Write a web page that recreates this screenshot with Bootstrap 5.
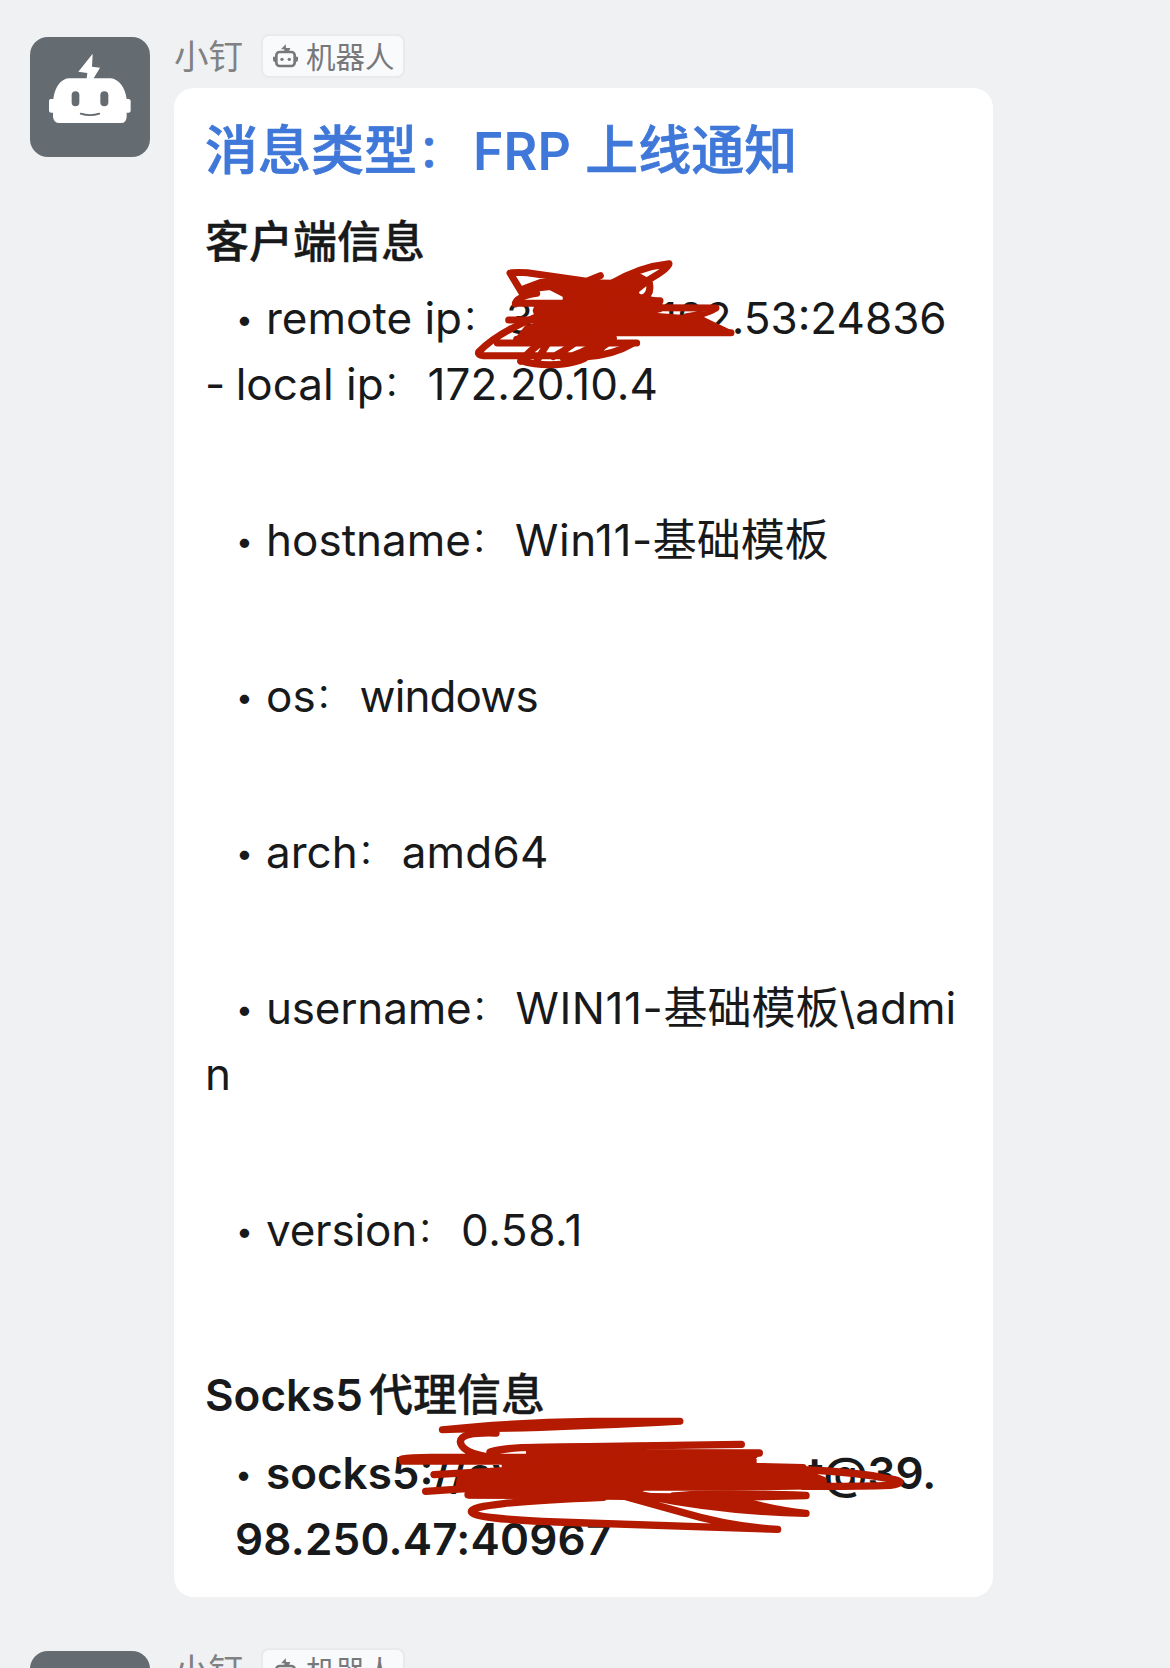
<!DOCTYPE html>
<html lang="zh-CN">
<head>
<meta charset="utf-8">
<meta name="viewport" content="width=device-width, initial-scale=1">
<title>小钉</title>
<link href="https://cdn.jsdelivr.net/npm/bootstrap@5.3.0/dist/css/bootstrap.min.css" rel="stylesheet">
<style>
body{background:#eff1f3;color:#18191a;font-family:Inter,"Noto Sans CJK SC",sans-serif;font-size:44px;line-height:66px;height:1668px;overflow:hidden}
.msg{padding:34px 0 0 30px;height:1614px;gap:24px}
.msg-next{height:54px;overflow:hidden}
.avatar{width:120px;height:120px;margin-top:3px;flex:none}
.who{height:44px;gap:18px;margin-bottom:10px}
.who-name{font-size:34.5px;line-height:44px;color:#808183;padding-top:2px}
.bot-tag{width:144px;height:44px;border:2px solid #e8eaec;border-radius:8px;background:#f9fafc;color:#77787a;font-size:29.5px;line-height:40px;padding-left:10px;gap:8px}
.bot-tag span{padding-top:2px}
.bubble{width:819px;height:1509px;border-radius:20px;padding:30px 31px 0;white-space:nowrap}
.ttl{font-size:53px;line-height:66px;font-weight:500;color:#3f78d8;margin:0 0 24px;-webkit-text-stroke:.7px #3f78d8}
.ttl b{font-size:52px;font-weight:600;-webkit-text-stroke:0;padding-left:3px}
.sec{font-size:44px;line-height:66px;font-weight:500;margin:0 0 10px;-webkit-text-stroke:.3px #18191a}
.sec b{font-weight:600;margin-right:6px;-webkit-text-stroke:0}
.sec-last{margin-bottom:12px}
.line{height:66px}
.gap-after{margin-bottom:90px}
.gap-section{margin-bottom:99px}
.indent{padding-left:30px}
.dot{display:inline-block;width:61px;padding-left:31px;font-size:30px;line-height:1;position:relative;top:-4px}
.dash{letter-spacing:-1px}
.cln{display:inline-block;width:44px;font-size:33px;line-height:1;padding-left:0;position:relative;top:-5px}
.ttl .cln{width:53px;font-size:44px;padding-left:1px;top:-3px}
.hid-a{display:inline-block;width:126px}
.hid-b{display:inline-block;width:290px}
.ls1{letter-spacing:.2px}.ls2{letter-spacing:.6px}.ls3{letter-spacing:-.9px}.ls4{letter-spacing:-.2px}
.scribble{position:absolute;overflow:visible;fill:none;stroke:#b31a00;stroke-linecap:round;stroke-linejoin:round;pointer-events:none}
.scribble-ip{left:440px;top:240px}
.scribble-proxy{left:390px;top:1410px}
</style>
</head>
<body>
<svg class="d-none">
<symbol id="bot" viewBox="0 0 360 360">
<rect width="360" height="360" rx="54" fill="#646b71"/>
<path fill="#fff" d="M188 50L145 104L172 108L170 124H116C92 126 74 152 70 186H61Q57 187 57 192V221Q57 227 64 227H69V240Q72 258 88 258H274Q288 258 290 240V227H297Q302 226 302 221V192Q302 187 297 186H290C286 152 266 126 242 124H191L210 92L186 89Z"/>
<rect x="125" y="163" width="23" height="45" rx="11.5" fill="#646b71"/><rect x="211" y="163" width="24" height="45" rx="12" fill="#646b71"/>
<path d="M152 230Q180 239 208 230" fill="none" stroke="#646b71" stroke-width="5" stroke-linecap="round"/>
</symbol>
<symbol id="bot-mini" viewBox="0 0 75 72">
<rect x="10" y="24" width="55" height="42" rx="10" fill="none" stroke="#77787a" stroke-width="8"/>
<path fill="#77787a" d="M38 1L24 16H34V24H47L52 12H39ZM0 38H9V53H4Q0 53 0 47ZM66 38H75V47Q75 53 71 53H66Z"/>
<circle cx="27" cy="46" r="5" fill="#77787a"/><circle cx="49" cy="46" r="5" fill="#77787a"/>
</symbol>
</svg>

<div class="msg d-flex align-items-start">
<svg class="avatar"><use href="#bot"/></svg>
<div>
<div class="who d-flex align-items-center"><span class="who-name">小钉</span><span class="bot-tag d-flex align-items-center"><svg width="25" height="24"><use href="#bot-mini"/></svg><span>机器人</span></span></div>
<div class="bubble bg-white">
<h1 class="ttl">消息类型<span class="cln">：</span><b>FRP</b> 上线通知</h1>
<h2 class="sec">客户端信息</h2>
<div class="line"><span class="dot">•</span>remote ip<span class="cln">：</span>3<span class="hid-a"></span>102.53:24836</div>
<div class="line gap-after"><span class="dash">- </span>local ip<span class="cln">：</span>172.20.10.4</div>
<div class="line gap-after"><span class="dot">•</span>hostname<span class="cln">：</span><span class="ls2">Win11-</span>基础模板</div>
<div class="line gap-after"><span class="dot">•</span>os<span class="cln">：</span><span class="ls3">windows</span></div>
<div class="line gap-after"><span class="dot">•</span>arch<span class="cln">：</span><span class="ls1">amd64</span></div>
<div class="line"><span class="dot">•</span><span class="ls4">username</span><span class="cln">：</span><span class="ls2">WIN11-</span>基础模板\admi</div>
<div class="line gap-after">n</div>
<div class="line gap-section"><span class="dot">•</span><span class="ls4">version</span><span class="cln">：</span><span class="ls2">0.58.1</span></div>
<h2 class="sec sec-last"><b>Socks5</b>代理信息</h2>
<div class="line fw-semibold"><span class="dot">•</span>socks5://ev<span class="hid-b"></span>t@39.</div>
<div class="line fw-semibold indent ls1">98.250.47:40967</div>
</div>
</div>
</div>

<div class="msg msg-next d-flex align-items-start">
<svg class="avatar"><use href="#bot"/></svg>
<div class="who d-flex align-items-center"><span class="who-name">小钉</span><span class="bot-tag d-flex align-items-center"><svg width="25" height="24"><use href="#bot-mini"/></svg><span>机器人</span></span></div>
</div>

<!-- hand-drawn redaction over the remote address -->
<svg class="scribble scribble-ip" width="330" height="150" viewBox="0 0 990 450" stroke-width="21">
<path d="M247 160L210 99Q214 96 262 98L440 124L481 107"/>
<path d="M515 130Q600 80 687 71Q690 90 540 165"/>
<path d="M250 143L300 124L430 125L520 126L600 108L628 124Q604 140 588 155L595 168L660 182L660 210L600 222L785 236L870 276L700 280H530L500 300L485 330L450 328L470 297L230 300L260 262L300 252L285 212L290 198L375 192V166L330 143L255 152Z" fill="#b31a00" stroke-width="14"/>
<path d="M226 192Q226 170 290 160M226 190H380M628 128Q636 165 605 176M660 203L828 204Q800 222 740 230L784 238M206 240H400M873 278H480M660 182H500"/>
<path d="M290 230Q170 280 116 336Q112 346 130 347H260M172 309H590M230 298H400"/>
<path d="M242 362Q300 380 370 372Q430 362 440 350Q520 345 575 312M242 364Q270 330 315 300M290 365Q300 345 322 312M260 347H440Q480 330 520 295M340 350Q370 335 400 312M370 355Q430 340 470 310"/>
</svg>

<!-- hand-drawn redaction over the proxy credentials -->
<svg class="scribble scribble-proxy" width="530" height="130" viewBox="0 0 1590 390" stroke-width="22">
<path d="M157 59Q350 38 600 34L870 34Q600 48 400 54Q250 56 157 59Z" fill="#b31a00" stroke-width="21"/>
<path d="M318 69Q212 65 211 95Q214 128 300 142M300 126Q350 112 440 112L1054 103M36 147Q60 142 120 142H430M38 153H420"/>
<path d="M418 112L760 108V128L1100 130L1090 140V168L1240 172L1246 190L1300 210V228L1000 232H760L720 256H236L236 236L206 235L210 205L345 183V158L418 148Z" fill="#b31a00" stroke-width="20"/>
<path d="M1108 129H760M132 194L345 182M107 244L240 235M1250 180Q1400 186 1500 207Q1560 216 1500 226Q1400 230 1240 229M234 254L1000 262L1248 257M850 258Q960 246 1248 256"/>
<path d="M640 262Q240 278 244 305Q246 326 500 336L1163 358Q1020 350 870 305L700 258M760 256Q1000 305 1248 310Q1150 300 1040 268"/>
<path d="M760 258L1000 257L1110 288Q960 290 860 270Z" fill="#b31a00" stroke-width="8"/>
</svg>
</body>
</html>
